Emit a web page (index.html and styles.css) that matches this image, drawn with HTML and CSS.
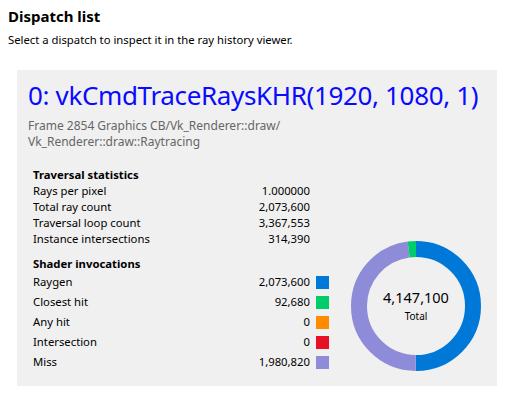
FILE: index.html
```html
<!DOCTYPE html>
<html>
<head>
  <link rel="stylesheet" href="styles.css">
</head>
<body>
  <h1 class="page-title">Dispatch list</h1>
  <p class="page-hint">Select a dispatch to inspect it in the ray history viewer.</p>

  <div class="dispatch-card">
    <div class="dispatch-name">0: vkCmdTraceRaysKHR(1920, 1080, 1)</div>
    <div class="dispatch-path">Frame 2854 Graphics CB/Vk_Renderer::draw/<br>Vk_Renderer::draw::Raytracing</div>

    <div class="dispatch-body">
      <div class="stats">
        <div class="stats-title">Traversal statistics</div>
        <div class="stat-row"><span>Rays per pixel</span><span>1.000000</span></div>
        <div class="stat-row"><span>Total ray count</span><span>2,073,600</span></div>
        <div class="stat-row"><span>Traversal loop count</span><span>3,367,553</span></div>
        <div class="stat-row"><span>Instance intersections</span><span>314,390</span></div>

        <div class="stats-title shader-title">Shader invocations</div>
        <div class="shader-row"><span class="shader-label">Raygen</span><span>2,073,600</span><span class="swatch raygen"></span></div>
        <div class="shader-row"><span class="shader-label">Closest hit</span><span>92,680</span><span class="swatch closest"></span></div>
        <div class="shader-row"><span class="shader-label">Any hit</span><span>0</span><span class="swatch anyhit"></span></div>
        <div class="shader-row"><span class="shader-label">Intersection</span><span>0</span><span class="swatch intersection"></span></div>
        <div class="shader-row"><span class="shader-label">Miss</span><span>1,980,820</span><span class="swatch miss"></span></div>
      </div>

      <div class="donut">
        <svg width="130" height="130" viewBox="0 0 130 130">
          <g transform="rotate(-90 65 65)" fill="none" stroke-width="16">
            <!-- circumference = 2 * pi * 57 = 358.14 -->
            <circle cx="65" cy="65" r="57" stroke="#0078d7" stroke-dasharray="179.07 358.14"/>
            <circle cx="65" cy="65" r="57" stroke="#8e8cd8" stroke-dasharray="171.07 358.14" stroke-dashoffset="-179.07"/>
            <circle cx="65" cy="65" r="57" stroke="#00cc6a" stroke-dasharray="8.00 358.14" stroke-dashoffset="-350.14"/>
          </g>
        </svg>
        <div class="donut-center">
          <div class="donut-total">4,147,100</div>
          <div class="donut-label">Total</div>
        </div>
      </div>
    </div>
  </div>
</body>
</html>
```

FILE: styles.css
```css
body {
  font-family: 'Noto Sans', 'Open Sans', Arial, sans-serif;
  margin: 0;
  padding: 5px 8px;
  background-color: #ffffff;
  color: #000000;
}

.page-title {
  font-size: 15px;
  font-weight: bold;
  margin: 0;
  line-height: 22px;
}

.page-hint {
  font-size: 11.3px;
  margin: 5px 0 0 0;
  line-height: 16px;
}

.dispatch-card {
  background-color: #f0f0f0;
  margin: 22px 0 0 9px;
  width: 480px;
  height: 316px;
  box-sizing: border-box;
  padding: 8px 16px 0 11px;
}

.dispatch-name {
  font-size: 26px;
  letter-spacing: -0.35px;
  color: #0a0aff;
  line-height: 34px;
  white-space: nowrap;
}

.dispatch-path {
  font-size: 12px;
  color: #666666;
  line-height: 16px;
  margin-top: 6px;
}

.dispatch-body {
  display: flex;
  align-items: flex-end;
  justify-content: space-between;
  margin-top: 17px;
  padding-left: 5px;
}

.stats {
  width: 296px;
  font-size: 11.3px;
}

.stats-title {
  font-weight: bold;
  line-height: 16px;
}

.shader-title {
  margin-top: 9px;
}

.stat-row {
  display: flex;
  justify-content: space-between;
  line-height: 16px;
  width: 277px;
}

.shader-row {
  display: flex;
  align-items: center;
  line-height: 20px;
}

.shader-label {
  flex: 1;
}

.swatch {
  width: 13px;
  height: 13px;
  margin-left: 6px;
}

.swatch.raygen { background-color: #0078d7; }
.swatch.closest { background-color: #00cc6a; }
.swatch.anyhit { background-color: #ff8c00; }
.swatch.intersection { background-color: #e81123; }
.swatch.miss { background-color: #8e8cd8; }

.donut {
  position: relative;
  width: 130px;
  height: 130px;
  margin-bottom: 1px;
}

.donut svg {
  display: block;
}

.donut-center {
  position: absolute;
  top: 0;
  left: 0;
  width: 100%;
  height: 100%;
  display: flex;
  flex-direction: column;
  justify-content: center;
  align-items: center;
}

.donut-total {
  font-size: 14.5px;
  line-height: 20px;
}

.donut-label {
  font-size: 10px;
  line-height: 18px;
}
```
